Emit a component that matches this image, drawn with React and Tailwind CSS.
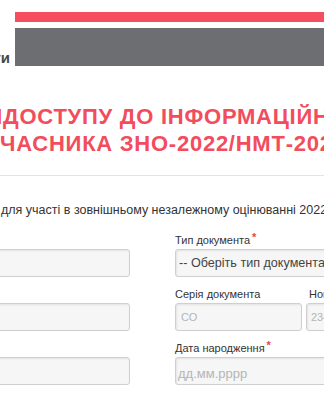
const FONT = "font-['Liberation_Sans',Arial,sans-serif]"

function Label({ children, required }) {
  return (
    <div className="mb-[2px] h-[14px] whitespace-nowrap text-[11px] leading-[14px] text-[#333]">
      {children}
      {required ? <span className="relative -top-[3px] ml-[2px] text-[11px] font-bold text-[#e8454e]">*</span> : null}
    </div>
  )
}

function Box({ children, className = '' }) {
  return (
    <div
      className={
        'flex h-[28px] items-center overflow-hidden whitespace-nowrap rounded-[3px] border border-[#cfcfcf] bg-[#f6f6f6] shadow-[inset_1px_1px_2px_rgba(0,0,0,0.08)] ' +
        className
      }
    >
      {children}
    </div>
  )
}

export default function App() {
  return (
    <div className={`h-[400px] w-[324px] overflow-hidden bg-white ${FONT}`}>
      {/* header: logo text cut off on the left, two bars */}
      <header className="flex pt-[12px]">
        <div className="flex h-[54px] w-[15px] shrink-0 flex-col items-end justify-end pr-[5px]">
          <div className="flex w-0 justify-end whitespace-nowrap text-[15px] font-bold leading-[16px] text-[#474747]">
            <span>якості освіти</span>
          </div>
        </div>
        <div className="flex flex-1 flex-col">
          <div className="h-[10px] bg-[#f44e5f]" />
          <div className="mt-[6px] h-[38px] bg-[#6d6e71]" />
        </div>
      </header>

      {/* title */}
      <div className="mt-[37px] whitespace-nowrap text-[22px] font-bold leading-[27px] tracking-[0.75px] text-[#f24c5d]">
        <div className="flex">
          <div className="flex w-[3px] shrink-0 justify-end">
            <span>ЗАЯВА ДЛЯ</span>
          </div>
          <span>ДОСТУПУ ДО ІНФОРМАЦІЙНОЇ СТОРІНКИ</span>
        </div>
        <div className="flex">
          <div className="flex w-0 shrink-0 justify-end">
            <span>У</span>
          </div>
          <span>ЧАСНИКА ЗНО-2022/НМТ-2022</span>
        </div>
      </div>

      <div className="mt-[18px] h-px bg-[#e3e3e3]" />

      <p className="mt-[25px] whitespace-nowrap pl-[1px] text-[12.5px] leading-[18px] text-[#333]">
        для участі в зовнішньому незалежному оцінюванні 2022 році
      </p>

      {/* form */}
      <div className="mt-[14px] flex">
        <div className="-ml-[20px] flex w-[150px] shrink-0 flex-col gap-[10px]">
          <div>
            <div className="mb-[2px] h-[14px]" />
            <Box />
          </div>
          <div>
            <div className="mb-[2px] h-[14px]" />
            <Box />
          </div>
          <div>
            <div className="mb-[2px] h-[14px]" />
            <Box />
          </div>
        </div>

        <div className="ml-[45px] flex w-[320px] shrink-0 flex-col gap-[10px]">
          <div>
            <Label required>Тип документа</Label>
            <Box className="pl-[3px] text-[12.6px] text-[#444]">-- Оберіть тип документа</Box>
          </div>
          <div className="flex gap-[4px]">
            <div className="w-[127px] shrink-0">
              <Label>Серія документа</Label>
              <Box className="pl-[5px] text-[11px] text-[#b5b5b5]">СО</Box>
            </div>
            <div className="w-[150px] shrink-0">
              <div className="pl-[3px]">
                <Label>Номер документа</Label>
              </div>
              <Box className="pl-[4px] text-[11px] text-[#b5b5b5]">234567</Box>
            </div>
          </div>
          <div>
            <Label required>Дата народження</Label>
            <Box className="items-end pb-[2px] pl-[2px] text-[13px] leading-[16px] text-[#b5b5b5]">дд.мм.рррр</Box>
          </div>
        </div>
      </div>
    </div>
  )
}
